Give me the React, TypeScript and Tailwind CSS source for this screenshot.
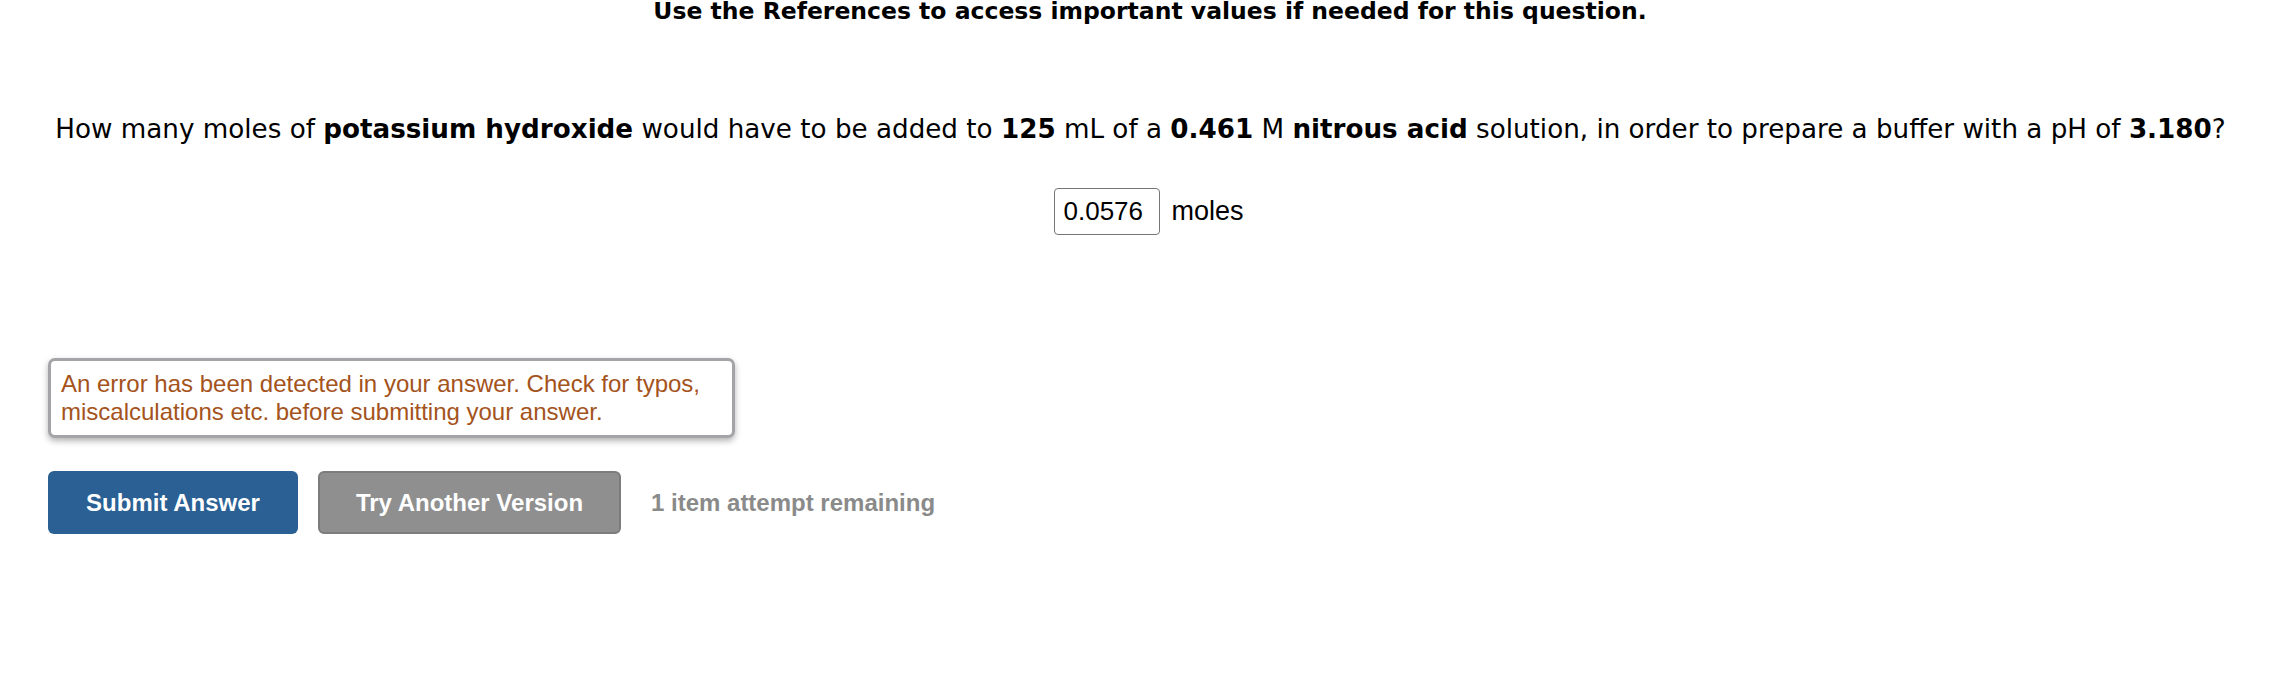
export default function App() {
  return (
    <div className="min-h-screen bg-white text-black">
      {/* References note */}
      <div className="mt-[-2px] pl-[26px] text-center font-bold text-[23.5px] leading-[26px] font-['DejaVu_Sans',Verdana,sans-serif]">
        Use the References to access important values if needed for this question.
      </div>

      {/* Question */}
      <p className="mt-[89px] pl-[7px] text-center text-[26.2px] leading-[32px] font-['DejaVu_Sans',Verdana,sans-serif]">
        How many moles of <b>potassium hydroxide</b> would have to be added to <b>125</b> mL of a{' '}
        <b>0.461</b> M <b>nitrous acid</b> solution, in order to prepare a buffer with a pH of{' '}
        <b>3.180</b>?
      </p>

      {/* Answer */}
      <div className="mt-[43px] flex items-center justify-center gap-[11px] font-['Liberation_Sans',Arial,sans-serif] pl-[24px]">
        <input
          type="text"
          defaultValue="0.0576"
          className="h-[47px] w-[106px] rounded-[4px] border border-[#767676] px-[8px] text-[26px] text-black outline-none"
        />
        <span className="text-[27px]">moles</span>
      </div>

      {/* Error + actions */}
      <div className="mt-[123px] px-[48px] font-['Liberation_Sans',Arial,sans-serif]">
        <div className="h-[80px] w-[687px] rounded-[7px] border-[3px] border-[#a4a4a8] bg-white px-[10px] pt-[9px] text-[24px] leading-[28px] text-[#a4531c] shadow-[0_3px_6px_rgba(0,0,0,0.3)]">
          An error has been detected in your answer. Check for typos,
          <br />
          miscalculations etc. before submitting your answer.
        </div>

        <div className="mt-[33px] flex items-center gap-[20px]">
          <button className="h-[63px] w-[250px] rounded-[6px] bg-[#2a6093] text-[24px] font-bold text-white">
            Submit Answer
          </button>
          <button className="h-[63px] w-[303px] rounded-[6px] border-[2px] border-[#7c7c7c] bg-[#8f8f8f] text-[24px] font-bold text-white">
            Try Another Version
          </button>
          <span className="ml-[10px] text-[24px] font-bold text-[#8a8a8a]">1 item attempt remaining</span>
        </div>
      </div>
    </div>
  );
}
